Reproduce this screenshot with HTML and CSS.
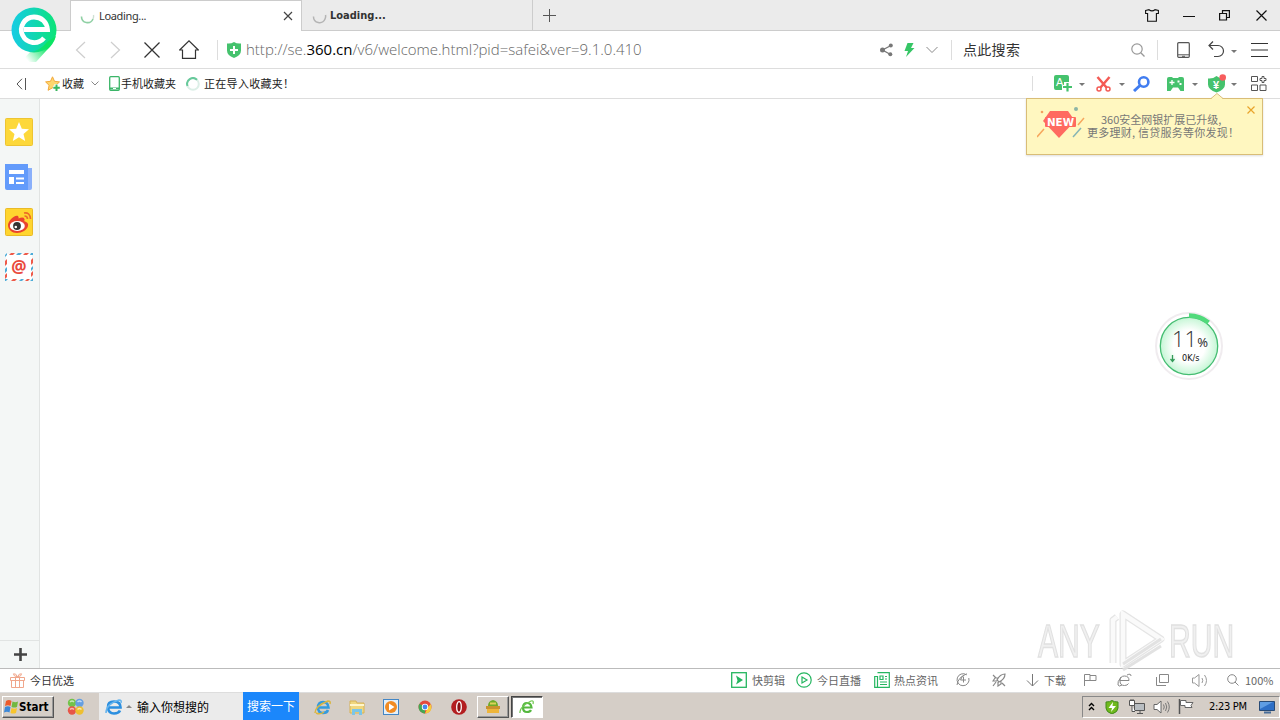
FILE: index.html
```html
<!doctype html>
<html lang="zh-CN">
<head>
<meta charset="utf-8">
<title>360安全浏览器</title>
<link rel="stylesheet" href="styles.css">
</head>

<body>
<div id="desktop">
	<!-- 标签栏 -->
	<div class="tabs">
		<div class="tab on">
			<svg class="spin" width="15" height="15" viewBox="0 0 15 15"><path d="M1.5 7.5a6 6 0 0 0 11.5 2.5" fill="none" stroke="#8fd0a4" stroke-width="1.6"/><path d="M13 10a6 6 0 0 0 .5-4" fill="none" stroke="#cfe0d3" stroke-width="1.4"/></svg>
			<span class="name">Loading...</span>
			<svg class="close" width="10" height="10" viewBox="0 0 10 10"><path d="M1 1l8 8M9 1l-8 8" stroke="#444" stroke-width="1.2"/></svg>
		</div>
		<div class="tab">
			<svg class="spin" width="15" height="15" viewBox="0 0 15 15"><path d="M1.5 7.5a6 6 0 0 0 11.5 2.5a6 6 0 0 0 .5-4" fill="none" stroke="#b4b4b4" stroke-width="1.5"/></svg>
			<b class="name">Loading...</b>
		</div>
		<svg class="add" width="13" height="13" viewBox="0 0 13 13"><path d="M6.500 0v13M0 6.500h13" stroke="#555"/></svg>
		<div class="win">
			<svg width="14" height="13" viewBox="0 0 14 13"><path d="M.6 1.500L4 .7q3 2.300 6 0l3.400.8v3h-2v7.800H2.600V4.500h-2z" fill="none" stroke="#111" stroke-width="1.100"/></svg>
			<svg width="12" height="10" viewBox="0 0 12 10"><path d="M0 5.500h12" stroke="#111"/></svg>
			<svg width="11" height="11" viewBox="0 0 11 11"><path d="M.6 3.500h6.900v6.500H.6zM3.500 3V.6h6.900v6.900H8" fill="none" stroke="#111" stroke-width="1.2"/></svg>
			<svg width="11" height="11" viewBox="0 0 11 11"><path d="M.5.5l10 10M10.500.5l-10 10" stroke="#111" stroke-width="1.2"/></svg>
		</div>
	</div>

	<!-- 地址栏 -->
	<div class="nav">
		<div class="go">
			<svg width="11" height="18" viewBox="0 0 11 18"><path d="M10 1L1.500 9l8.500 8" fill="none" stroke="#cecece" stroke-width="1.200"/></svg>
			<svg width="11" height="18" viewBox="0 0 11 18"><path d="M1 1l8.500 8L1 17" fill="none" stroke="#cecece" stroke-width="1.200"/></svg>
			<svg width="16" height="16" viewBox="0 0 16 16"><path d="M.5.5l15 15M15.500.5l-15 15" stroke="#333" stroke-width="1.300"/></svg>
			<svg width="20" height="19" viewBox="0 0 20 19"><path d="M.7 10L10 .9l9.300 9.100h-2.800v8.300h-13V10z" fill="none" stroke="#333" stroke-width="1.200"/></svg>
		</div>
		<i class="line"></i>
		<svg class="safe" width="14" height="16" viewBox="0 0 14 16"><path d="M0 1.500Q4 2 7 0q3 2 7 1.500v7q0 5-7 7.500q-7-2.500-7-7.500z" fill="#45c26d"/><path d="M7 4v8M3 8h8" stroke="#fff" stroke-width="2"/></svg>
		<div class="url">http://se.<em>360.cn</em>/v6/welcome.html?pid=safei&amp;ver=9.1.0.410</div>
		<div class="act">
			<svg width="13" height="14" viewBox="0 0 13 14"><path d="M11 2.500L2.500 7l8 4.500" fill="none" stroke="#777" stroke-width="1.300"/><circle cx="10.800" cy="2.500" r="2" fill="#777"/><circle cx="2.500" cy="7" r="2.500" fill="#777"/><circle cx="10.300" cy="11.300" r="2" fill="#777"/></svg>
			<svg width="11" height="14" viewBox="0 0 11 14"><path d="M3.500 0h6L7 5h3.500L2 14l2-6H.5z" fill="#36c666"/></svg>
			<svg width="12" height="8" viewBox="0 0 12 8"><path d="M.5 1L6 6.500 11.500 1" fill="none" stroke="#888"/></svg>
		</div>
		<i class="line"></i>
		<div class="search">点此搜索</div>
		<svg class="mag" width="14" height="14" viewBox="0 0 14 14"><circle cx="6" cy="6" r="5.200" fill="none" stroke="#999" stroke-width="1.200"/><path d="M9.800 9.800l3.700 3.700" stroke="#999" stroke-width="1.300"/></svg>
		<i class="line"></i>
		<div class="tool">
			<svg width="13" height="16" viewBox="0 0 13 16"><rect x=".7" y=".7" width="11.600" height="14.600" rx="1" fill="none" stroke="#555" stroke-width="1.200"/><path d="M1 12.800h11" stroke="#555"/><path d="M5 14.300h3" stroke="#555"/></svg>
			<svg width="17" height="17" viewBox="0 0 17 17"><path d="M5 .5L1 4.500l4 4M1 4.500h9a5.500 5.500 0 0 1 0 11H6" fill="none" stroke="#444" stroke-width="1.200"/></svg>
			<i class="caret"></i>
			<svg width="17" height="14" viewBox="0 0 17 14"><path d="M0 .5h17M0 7h17M0 13.500h17" stroke="#333"/></svg>
		</div>
	</div>

	<!-- 收藏栏 -->
	<div class="fav">
		<svg class="fold" width="10" height="12" viewBox="0 0 10 12"><path d="M6 .8L1 6l5 5.200M9.500 0v12" fill="none" stroke="#555"/></svg>
		<svg class="star" width="16" height="16" viewBox="0 0 16 16"><path d="M7.500.8l2 4.500 5 .6-3.700 3.400 1 5-4.300-2.500-4.400 2.500 1-5L.6 5.900l4.900-.6z" fill="#fdd66e" stroke="#f2a83c"/><path d="M11.500 8v7.500M8 11.700h7.500" stroke="#fff" stroke-width="4"/><path d="M11.500 8.500v6.500M8.300 11.700h6.500" stroke="#3ab55e" stroke-width="2"/></svg>
		<span class="t1">收藏</span>
		<svg class="down" width="8" height="5" viewBox="0 0 8 5"><path d="M.5.5L4 4 7.500.5" fill="none" stroke="#888"/></svg>
		<svg class="phone" width="11" height="15" viewBox="0 0 11 15"><rect x=".7" y=".7" width="9.600" height="13.600" rx="1" fill="#fff" stroke="#3bb568" stroke-width="1.300"/><path d="M1 12.500h9" stroke="#3bb568" stroke-width="2"/><path d="M4 12.500h3" stroke="#fff"/></svg>
		<span class="t2">手机收藏夹</span>
		<svg class="ring" width="14" height="14" viewBox="0 0 14 14"><circle cx="7" cy="7" r="5.800" fill="none" stroke="#dcefe7" stroke-width="2"/><path d="M1.500 9A5.800 5.800 0 0 1 11 2.800" fill="none" stroke="#68c99b" stroke-width="2"/></svg>
		<span class="t3">正在导入收藏夹！</span>
		<div class="ext">
			<i class="line"></i>
			<svg width="18" height="17" viewBox="0 0 18 17"><path d="M2 0h11q2 0 2 2v5h-5v4H8v4H2q-2 0-2-2V2q0-2 2-2z" fill="#45c26d"/><text class="a" x="2" y="11">A</text><path d="M13.500 7v10M8.500 12H18" stroke="#fff" stroke-width="4"/><path d="M13.500 8v8.500M9 12h9" stroke="#45c26d" stroke-width="2.200"/></svg>
			<i class="caret c1"></i>
			<svg width="15" height="16" viewBox="0 0 15 16"><path d="M1.500 1l9 10.500M13.500 1L4.500 11.500" stroke="#f45b55" stroke-width="2.500"/><circle cx="3" cy="13" r="2" fill="none" stroke="#f45b55" stroke-width="1.500"/><circle cx="12" cy="13" r="2" fill="none" stroke="#f45b55" stroke-width="1.500"/></svg>
			<i class="caret c2"></i>
			<svg class="key" width="17" height="16" viewBox="0 0 17 16"><circle cx="10.700" cy="6" r="4.700" fill="none" stroke="#417df0" stroke-width="2.600"/><path d="M7 9.500L1 15" stroke="#417df0" stroke-width="3"/></svg>
			<svg width="17" height="14" viewBox="0 0 17 14"><path d="M2 0h3l1 1h5l1-1h3q2 0 2 2v12h-3.500l-2.500-3.500H6L3.500 14H0V2q0-2 2-2z" fill="#45c26d"/><path d="M5 3v5M2.500 5.500h5" stroke="#fff" stroke-width="1.300"/><path d="M10.500 3.500h2v2h-2zM12.500 6h2v2h-2z" fill="#fff"/></svg>
			<i class="caret c3"></i>
			<svg width="18" height="19" viewBox="0 0 18 19"><path d="M0 4.500q5 .5 8.500-2.500 3.500 3 8.500 2.500v6q0 5-8.500 8Q0 15.500 0 10.500z" fill="#45c26d"/><text class="y" x="5" y="14.500">¥</text><circle cx="14.700" cy="3.500" r="3.300" fill="#f75d5d"/></svg>
			<i class="caret c4"></i>
			<svg width="16" height="15" viewBox="0 0 16 15"><path d="M.5.500h6v5h-6zM.5 9h6v5.500h-6zM9 9h6v5.500H9z" fill="none" stroke="#555"/><path d="M11 .5h2v2h2v2h-2v2h-2v-2H9v-2h2z" fill="none" stroke="#555"/></svg>
		</div>
	</div>

	<div class="main">
		<div class="side">
			<svg width="28" height="28" viewBox="0 0 28 28"><rect x=".5" y=".5" width="27" height="27" rx="1" fill="#fdd83a" stroke="#edc432"/><path d="M14 4l2.800 6.700 7.200.6-5.500 4.700 1.700 7-6.200-3.800L7.800 23l1.700-7L4 11.300l7.200-.6z" fill="#fff"/></svg>
			<svg width="28" height="28" viewBox="0 0 28 28"><path d="M22 5h5v20q0 2-2 2h-3z" fill="#8ab0fb"/><path d="M0 1h23v26H2q-2 0-2-2z" fill="#639bfb"/><path d="M4 7h15v4H4zM4 14h5v7H4zM11 14.500h8v2h-8zM11 19h8v2h-8z" fill="#fff"/></svg>
			<svg width="28" height="28" viewBox="0 0 28 28"><rect x=".5" y=".5" width="27" height="27" rx="1" fill="#ffd52f" stroke="#e9ba27"/><path d="M3 17C3 13 10 6 13 8q1 1 .5 2.500 5-2 6 .5.500 1.500-.5 2 5 1.500 4 5C22 22 17 25 12 25c-5 0-9-3.500-9-8z" fill="#e9432e"/><ellipse cx="12.300" cy="18" rx="7.500" ry="5" fill="#fff"/><circle cx="12" cy="18" r="3.900" fill="#333"/><circle cx="10.800" cy="19" r="1.300" fill="#fff"/><path d="M19 5q6-1 6.500 6M19.500 8q3 0 3 3" fill="none" stroke="#ec6c28" stroke-width="1.700"/></svg>
			<div class="mail"><svg width="28" height="28" viewBox="0 0 28 28"><path d="M1 1h26v26H1z" fill="#fff"/><path d="M6 0h4L8 2H4zM20 0h4l-2 2h-4zM28 5v5l-2 2V7zM28 18v4l-2 2v-4zM6 28h4l2-2H8zM20 28h3l2-2h-3zM0 8v5l2-2V6zM0 22v4l2-2v-4z" fill="#ee5a49"/><path d="M13 0h4l-2 2h-4zM26 0h2v2h-3zM28 13v3l-2 2v-3zM28 25v3h-3zM0 28v-2h3l-2 2zM14 28h3l2-2h-3zM0 2v2l2-2V0zM0 16v4l2-2v-4z" fill="#4dacd8"/></svg><b>@</b></div>
			<div class="plus"><svg width="13" height="13" viewBox="0 0 13 13"><path d="M6.500 0v13M0 6.500h13" stroke="#444" stroke-width="2.600"/></svg></div>
		</div>

		<!-- 升级提示 -->
		<div class="tip">
			<svg class="arrow" width="12" height="6" viewBox="0 0 12 6"><path d="M0 6l6-5 6 5z" fill="#fff7c0"/><path d="M0 5.500l6-5 6 5" fill="none" stroke="#d9bd77"/></svg>
			<svg class="gem" width="48" height="34" viewBox="0 0 48 34"><path d="M13 4h18l7 10-16 17L6 14z" fill="#ff6a60"/><rect x="8" y="10" width="31" height="10" rx="1" fill="#ff6a60"/><text x="10" y="19" textLength="27" lengthAdjust="spacingAndGlyphs">NEW</text><path d="M0 30l7-8M41 18l6-7" stroke="#f7a75d" stroke-width="1.500"/><path d="M36 30l8-9" stroke="#86b5b4" stroke-width="1.500"/><circle cx="39" cy="2" r="2" fill="#8db5a6"/><circle cx="5" cy="5" r="1.300" fill="#f4a160"/></svg>
			<p class="p1">360安全网银扩展已升级,</p>
			<p class="p2">更多理财, 信贷服务等你发现！</p>
			<svg class="x" width="8" height="8" viewBox="0 0 8 8"><path d="M.5.5l7 7M7.500.5l-7 7" stroke="#e9a42b" stroke-width="1.200"/></svg>
		</div>

		<!-- 加速球 -->
		<div class="ball">
			<svg width="72" height="72" viewBox="0 0 72 72">
				<defs><radialGradient id="glow"><stop offset=".55" stop-color="#fff"/><stop offset="1" stop-color="#c5f6d5"/></radialGradient></defs>
				<circle cx="36" cy="36" r="33" fill="#fff" stroke="#f0ecef" stroke-width="2"/>
				<circle cx="36" cy="36" r="28.700" fill="url(#glow)" stroke="#45bd72" stroke-width="1.300"/>
				<path d="M36 5.500a30.500 30.500 0 0 1 19.500 7" fill="none" stroke="#51da7b" stroke-width="4.500"/>
				<path d="M19.500 45v6M17.500 49l2 2.500 2-2.500" fill="none" stroke="#349b59" stroke-width="1.300"/>
			</svg>
			<div class="num">11<small>%</small></div>
			<div class="speed">0K/s</div>
		</div>

		<div class="mark">
			<span>ANY</span>
			<svg width="58" height="64" viewBox="0 0 58 64"><path d="M5 54V11l4-3M15 5v50l38-25z" fill="none" stroke="#e2e2e2" stroke-width="7" stroke-linejoin="round"/><path d="M5 54V11l4-3M15 5v50l38-25z" fill="none" stroke="#fafafa" stroke-width="4.500"/><path d="M15 55l38-25M15 61l38-24" stroke="#dfdfdf" stroke-width="3"/></svg>
			<span>RUN</span>
		</div>
	</div>

	<!-- 状态栏 -->
	<div class="status">
		<svg class="gift" width="15" height="15" viewBox="0 0 15 15"><path d="M.5 4.500h14v3H.5zM1.500 7.500h12v7h-12zM5.500 4.500v10M9.500 4.500v10M7.500 4Q3 3 3.500.8 6 0 7.500 4 9 0 11.500.8 12 3 7.500 4" fill="none" stroke="#f0a68b"/></svg>
		<span class="pick">今日优选</span>
		<div class="sr">
			<svg width="16" height="16" viewBox="0 0 16 16"><rect x=".7" y=".7" width="14.600" height="14.600" fill="none" stroke="#25b660" stroke-width="1.300"/><path d="M5 3.500l7 4.500-7 4.500 1.500-4z" fill="#25b660"/></svg>
			<span>快剪辑</span>
			<svg width="16" height="16" viewBox="0 0 16 16"><circle cx="8" cy="8" r="7.200" fill="none" stroke="#25b660" stroke-width="1.200"/><path d="M6 5l5 3-5 3z" fill="none" stroke="#25b660" stroke-width="1.200"/></svg>
			<span>今日直播</span>
			<svg width="16" height="16" viewBox="0 0 16 16"><path d="M3.500.7h11.800v14.600H.7V4.500h2.800v10.800M6 4h3v3.500H6zM11 4.500h2M11 7h2M6 10h7M6 12.500h7" fill="none" stroke="#25b660" stroke-width="1.200"/></svg>
			<span>热点资讯</span>
			<svg width="14" height="14" viewBox="0 0 14 14"><path d="M10.500 1.800A6 6 0 1 0 12.800 5M1 12Q2 4 11 .8M6.500 3L4.500 7H10M7.500 3.500v6" fill="none" stroke="#888"/></svg>
			<svg width="14" height="14" viewBox="0 0 14 14"><path d="M13 1Q8 1 5 7l2 2q6-3 6-8zM6 5H3L1 8h4M9 8v3l-3 2V9M4 9l-3 4M10 10l3 3M1 2l3 3" fill="none" stroke="#888" stroke-width="1.200"/></svg>
			<svg width="13" height="13" viewBox="0 0 13 13"><path d="M6.500 0v12M1 6.500l5.500 5.500L12 6.500" fill="none" stroke="#777"/></svg>
			<span>下载</span>
			<svg width="14" height="12" viewBox="0 0 14 12"><path d="M1.500 12V.5H7v6H1.500M7 1.500h6v5H7" fill="none" stroke="#888"/></svg>
			<svg width="15" height="14" viewBox="0 0 15 14"><path d="M2.500 7.500H12q0-4.500-4.500-4.500T3 8q0 4.500 4.500 4.500 3 0 4-2M10 2q4-2 4 1M4 4q-4 5-3 8 1 2 4 0" fill="none" stroke="#888"/></svg>
			<svg width="13" height="12" viewBox="0 0 13 12"><path d="M3.500.5h9v8h-9zM.5 3v8.500H10" fill="none" stroke="#888"/></svg>
			<svg width="16" height="13" viewBox="0 0 16 13"><path d="M.5 4h2L7 .5v12L2.500 9h-2zM10 4q1.500 2.500 0 5M12.500 1q4 5.500 0 11" fill="none" stroke="#999"/></svg>
			<svg width="12" height="12" viewBox="0 0 12 12"><circle cx="5" cy="5" r="4.300" fill="none" stroke="#888"/><path d="M8 8l3.500 3.500" stroke="#888"/></svg>
			<span class="zoom">100%</span>
		</div>
	</div>

	<!-- 任务栏 -->
	<div class="task">
		<div class="start"><svg width="15" height="15" viewBox="0 0 15 15"><path d="M2 2q3-2 5.500 0L6.500 7Q4 5.500 1 7z" fill="#ec5b2c"/><path d="M8.500 2.500q3 1.500 5.500 0L13 8q-2.500 1-5.500 0z" fill="#72b83f"/><path d="M1 8q3-1.500 5.500 0l-1 5.500Q3 12 0 13.500z" fill="#3c88d8"/><path d="M7.500 9q3 1.500 5.500 0l-1 5q-3 1-5.500 0z" fill="#f8c52d"/></svg><b>Start</b></div>
		<svg class="balls" width="18" height="18" viewBox="0 0 18 18"><circle cx="5" cy="5" r="4.200" fill="#72c34a"/><circle cx="12.500" cy="5" r="4.200" fill="#659fe2"/><circle cx="5" cy="12.500" r="4.200" fill="#e75648"/><circle cx="12.500" cy="12.500" r="4.200" fill="#eebf2f"/><path d="M3 4q2-2 4 0M10.500 4q2-2 4 0M3 11.500q2-2 4 0M10.500 11.500q2-2 4 0" fill="none" stroke="#fff" stroke-opacity=".6" stroke-width="1.500"/></svg>
		<div class="find">
			<svg width="18" height="18" viewBox="0 0 18 18"><path d="M3 9.500h12.500Q15.500 3.500 9 3.500T3 9.500t6 6q4.500 0 6-3" fill="none" stroke="#2b8fe0" stroke-width="2.700"/><path d="M1 15Q1 6 14 2q3 0 2 3" fill="none" stroke="#66b5ee" stroke-width="1.500"/></svg>
			<i class="up"></i>
			<span>输入你想搜的</span>
		</div>
		<div class="btn">搜索一下</div>
		<div class="apps">
			<svg width="18" height="18" viewBox="0 0 18 18"><path d="M4 9.500h10.500Q14 4 9 4T4 9.500 9 15q4 0 5-3" fill="none" stroke="#349bdd" stroke-width="2.500"/><path d="M1 15q0-7 13-12 3 0 2 3M2 15q4 2 8-1" fill="none" stroke="#d9b641" stroke-width="1.500"/></svg>
			<svg width="18" height="18" viewBox="0 0 18 18"><path d="M2 3h6l1 2h7v10H2z" fill="#efd77f" stroke="#d6b257"/><path d="M2 7h14" stroke="#fff6cb" stroke-width="2"/><path d="M4 17v-6h10v6h-3v-3H7v3z" fill="#7ac5e8"/></svg>
			<svg width="18" height="18" viewBox="0 0 18 18"><rect x="1.500" y="1.500" width="15" height="15" fill="#e5f0f8" stroke="#4386c5"/><circle cx="9" cy="9" r="6" fill="#f18b22"/><path d="M7 5.500l5.500 3.500L7 12.500z" fill="#fff"/></svg>
			<svg width="18" height="18" viewBox="0 0 18 18"><circle cx="9" cy="9" r="6.500" fill="#e34a3d"/><path d="M3.400 5.800L9 9v6.500A6.500 6.500 0 0 1 3.400 5.800z" fill="#43a853"/><path d="M9 15.500L12 9l3-3q2 9-6 9.500z" fill="#f6cd3b"/><circle cx="9" cy="9" r="3.200" fill="#fff"/><circle cx="9" cy="9" r="2.400" fill="#4688ed"/></svg>
			<svg width="18" height="18" viewBox="0 0 18 18"><circle cx="9" cy="9" r="7.800" fill="#b31e20"/><ellipse cx="9" cy="9" rx="2.300" ry="5.300" fill="#8b1013" stroke="#fff" stroke-width="1.300"/></svg>
			<div class="app"><svg width="16" height="16" viewBox="0 0 16 16"><path d="M2 8h12v6H2z" fill="#eeb53a"/><path d="M1 7h14v3H1z" fill="#c9922f"/><path d="M3 7q0-5 5-6 5 1 5 6z" fill="#6faa29"/><path d="M5 3.500h6v2H5z" fill="#dbd259"/></svg></div>
			<div class="app cur"><svg width="16" height="16" viewBox="0 0 16 16"><path d="M4 8.500h8.500Q12 4 8 4T4 8.500t4 4.500q3 0 4-2" fill="none" stroke="#55b83f" stroke-width="2.200"/><path d="M1 14Q0 8 12 2q3-1 2 3" fill="none" stroke="#75cb56" stroke-width="1.300"/></svg></div>
		</div>
		<div class="tray">
			<svg width="7" height="10" viewBox="0 0 7 10"><path d="M1 4L3.500 1.500 6 4M1 8L3.500 5.500 6 8" fill="none" stroke="#000" stroke-width="1.400"/></svg>
			<svg width="14" height="14" viewBox="0 0 14 14"><path d="M1 2q4 0 6-1.500Q9 2 13 2v6q0 4-6 6Q1 12 1 8z" fill="#70b91d" stroke="#408b1c"/><path d="M8 2L3.500 8H7l-1 4 5-6H7.500z" fill="#fff"/></svg>
			<svg width="16" height="15" viewBox="0 0 16 15"><path d="M5.500 4.500h10v7h-10zM8 14.500h6M11 12v2" fill="#b8bdc1" stroke="#555"/><path d="M.5 1.500h5v5h-5zM3 6.500v6h3M2 0v2M4 0v2" fill="#fff" stroke="#555"/></svg>
			<svg width="17" height="14" viewBox="0 0 17 14"><path d="M1 4.500h3L8 1v12L4 9.500H1z" fill="#fff" stroke="#666"/><path d="M10.500 4.500q1.500 2.500 0 5M12.500 3q2.500 4 0 8M14.500 1.500q3.500 5.500 0 11" fill="none" stroke="#777"/></svg>
			<svg width="16" height="15" viewBox="0 0 16 15"><path d="M1.500 0v15" stroke="#555" stroke-width="1.500"/><path d="M2.500 1.500H8v2h7l-2 3 1 2H7v-2H2.500z" fill="#fff" stroke="#666"/></svg>
			<span>2:23 PM</span>
			<svg width="16" height="14" viewBox="0 0 16 14"><path d="M.5 1.500h15v9H.5z" fill="#2e6fc6" stroke="#284b76"/><path d="M1 9l13-7H1z" fill="#5f9de3"/><path d="M5 12.500h7" stroke="#486d98" stroke-width="2"/></svg>
		</div>
	</div>

	<!-- 浏览器标志 -->
	<svg class="logo" width="48" height="56" viewBox="0 0 48 56">
		<defs>
			<linearGradient id="lg" x1="0" y1=".5" x2="1" y2=".5"><stop offset="0" stop-color="#16cce4"/><stop offset=".5" stop-color="#12d6b4"/><stop offset="1" stop-color="#0be477"/></linearGradient>
			<linearGradient id="tail" gradientUnits="userSpaceOnUse" x1="36" y1="40" x2="18" y2="55"><stop offset="0" stop-color="#0be463"/><stop offset="1" stop-color="#0be463" stop-opacity="0"/></linearGradient>
		</defs>
		<circle cx="24" cy="24" r="22.500" fill="url(#lg)"/>
		<path d="M46 30Q44 38 36 45L26 56H11l9-10q10-1 17-10z" fill="url(#tail)"/>
		<path d="M14 23.500h23.500C37 16 31.500 11 24 11A12.800 12.800 0 1 0 34 32" fill="none" stroke="#fff" stroke-width="4.800"/>
	</svg>
</div>
</body>
</html>
```
FILE: styles.css
```css
*{margin:0;padding:0;box-sizing:border-box}
body{width:1280px;height:720px;overflow:hidden;background:#fff;font:11px/14px "DejaVu Sans Condensed","Noto Sans CJK SC",sans-serif;color:#333}
svg{display:block;flex:none}
span,b,p,.url,.search,.btn{white-space:nowrap}
#desktop{position:relative;display:flex;flex-direction:column;width:1280px;height:720px}
.line{flex:none;width:1px;height:20px;background:#ddd}
.caret{flex:none;width:0;height:0;border:3px solid transparent;border-top-color:#777;border-bottom:0}

/* 标签栏 */
.tabs{display:flex;height:31px;padding-left:70px;background:#ebebeb;border-bottom:1px solid #ccc}
.tab{display:flex;align-items:center;width:231px;height:30px;padding:2px 9px 0 10px;border-right:1px solid #ccc}
.tab.on{width:232px;height:31px;background:#fff;border:1px solid #ccc;border-bottom:0;padding:0 8px 0 9px}
.tab .name{width:185px;margin-left:3px}
.tab.on .name{margin-left:4px;font-family:"Noto Sans",sans-serif;letter-spacing:-.35px}
.tab b{font-family:"DejaVu Sans Condensed",sans-serif}
.tab .close{margin-left:auto}
.add{margin:9px 0 0 10px}
.win{display:flex;align-items:center;gap:26px;margin-left:auto;padding:1px 13px 0 0}
.win svg:first-child{margin-right:-2px}
.win svg:nth-child(2){margin-right:-2px}

/* 地址栏 */
.nav{display:flex;align-items:center;height:38px;border-bottom:1px solid #ddd}
.go{display:flex;align-items:center;width:217px;padding-left:75px}
.go svg:nth-child(2){margin-left:24px}
.go svg:nth-child(3){margin-left:23px}
.go svg:nth-child(4){margin-left:19px}
.safe{margin-left:9px}
.url{width:639px;padding-left:5px;font:300 15px/20px "Open Sans",sans-serif;color:#666;padding-bottom:2px}
.url em{font-style:normal;color:#000;font-weight:400}
.act{display:flex;align-items:center;width:71px;gap:11px}
.search{width:179px;padding:0 0 2px 11px;font:14px/20px "Noto Sans CJK SC",sans-serif;letter-spacing:.3px}
.nav .mag{margin-right:12px}
.tool{display:flex;align-items:center;padding-left:19px}
.tool svg:nth-child(2){margin-left:18px}
.tool .caret{margin:3px 14px 0 6px}

/* 收藏栏 */
.fav{display:flex;align-items:center;height:30px;border-bottom:1px solid #ddd;font-family:"Noto Sans CJK SC",sans-serif;color:#222}
.fav span{margin-top:-2px}
.fold{margin-left:16px}
.star{margin-left:19px}
.t1{width:29px;padding-left:1px}
.down{margin-left:1px}
.phone{margin-left:10px}
.t2{width:65px;padding-left:1px}
.ring{margin-left:1px}
.t3{margin-left:4px;letter-spacing:.3px}
.ext{display:flex;align-items:center;margin-left:auto;padding-right:13px}
.ext .line{height:15px;margin-right:21px}
.ext text{font:bold 9px "Liberation Sans",sans-serif;fill:#fff}
.ext .a{font-size:11px;font-weight:normal}
.ext .y{font-size:11px}
.ext .c1{margin:2px 11px 0 7px}
.ext .c2{margin:2px 8px 0 8px}
.ext .c3{margin:2px 10px 0 8px}
.ext .c4{margin:2px 14px 0 5px}
.ext .c2+.key{margin-right:17px}

/* 主区域 */
.main{position:relative;display:flex;height:569px}
.side{display:flex;flex-direction:column;align-items:center;gap:17px;width:40px;padding-top:19px;padding-right:2px;background:#f4f7f6;border-right:1px solid #e1e4e3}
.mail{display:grid;place-items:center}
.mail>*{grid-area:1/1}
.mail b{padding:0 0 1px 1px;font:bold 17px/20px "Noto Sans",sans-serif;color:#e94a3d}
.plus{display:flex;justify-content:center;width:40px;height:28px;margin:auto -2px 0 0;padding:7px 0 0 1px;border-top:1px solid #e1e4e3}
.tip{position:absolute;top:-1px;left:1026px;width:237px;height:57px;background:#fff7c0;border:1px solid #d9bd77;box-shadow:0 1px 2px #ddd;font:11px/13px "Noto Sans CJK SC",sans-serif;color:#777}
.tip .arrow{position:absolute;top:-6px;left:184px}
.gem{position:absolute;left:10px;top:8px}
.gem text{font:bold 10px "DejaVu Sans",sans-serif;fill:#fff}
.tip .x{position:absolute;right:7px;top:7px}
.tip p{padding-left:60px}
.tip .p2{letter-spacing:.25px}
.tip .p1{margin-top:14px;padding-left:74px}
.ball{position:absolute;left:1153px;top:211px;width:72px;height:72px}
.num{position:absolute;left:19px;top:16px;font:300 22px/24px "Open Sans",sans-serif;color:#333}
.num small{font:13px/16px "Noto Sans",sans-serif;letter-spacing:-1px}
.speed{position:absolute;left:29px;top:43px;font:9px/11px "DejaVu Sans Condensed",sans-serif;color:#111}
.mark{position:absolute;z-index:2;left:1038px;top:510px;display:flex;align-items:center;opacity:.9}
.mark span{width:66px;font:47px/56px "Liberation Sans",sans-serif;color:#efefef;-webkit-text-stroke:1.5px #dedede;transform:scaleX(.64);transform-origin:0 50%;filter:blur(.4px)}
.mark svg{margin:0 3px 0 4px;filter:blur(.4px)}

/* 状态栏 */
.status{display:flex;align-items:center;height:25px;padding-bottom:1px;border-top:1px solid #bbb;border-bottom:1px solid #ddd;font-family:"Noto Sans CJK SC",sans-serif;color:#666}
.status span{padding-bottom:1px}
.gift{margin-left:10px}
.pick{margin-left:5px;color:#333}
.sr{display:flex;align-items:center;width:549px;margin-left:auto}
.sr span{width:44px;margin-left:5px}
.sr span:nth-of-type(1){width:38px;margin-right:6px}
.sr span:nth-of-type(2){width:51px;margin-right:6px}
.sr span:nth-of-type(3){width:51px;margin-left:4px;margin-right:11px}
.sr svg:nth-of-type(5){margin:0 20px 0 22px}
.sr span:nth-of-type(4){width:24px;margin-right:15px}
.sr svg:nth-of-type(7){margin-right:20px}
.sr svg:nth-of-type(8){margin-right:24px}
.sr svg:nth-of-type(9){margin-right:23px}
.sr svg:nth-of-type(10){margin-right:19px}
.sr .zoom{width:auto;margin-left:6px}

/* 任务栏 */
.task{display:flex;align-items:center;height:27px;background:#d5cec7;color:#000;font-family:"Noto Sans CJK SC",sans-serif}
.start{display:flex;align-items:center;width:52px;height:22px;margin-left:2px;padding-left:1px;border:1px solid;border-color:#fff #555 #555 #fff;box-shadow:inset -1px -1px #999}
.start b{font:bold 11.5px/14px "DejaVu Sans Condensed",sans-serif}
.balls{margin-left:13px}
.find{display:flex;align-items:center;width:144px;height:27px;margin-left:14px;padding-left:6px;background:#ebebeb;font-size:12px}
.up{border:3px solid transparent;border-bottom-color:#888;border-top:0;margin:0 5px 0 3px}
.btn{width:56px;height:28px;margin-top:-1px;background:#1b87fb;color:#fff;text-align:center;font-size:12px;line-height:28px}
.apps{display:flex;align-items:center;gap:16px;padding-left:15px}
.app{display:flex;align-items:center;justify-content:center;width:32px;height:22px;margin-left:-7px;border:1px solid;border-color:#fff #555 #555 #fff;box-shadow:inset -1px -1px #999}
.app.cur{margin-left:-14px;background:#fff;border-color:#444 #fff #fff #444;box-shadow:inset 1px 1px #777}
.tray{display:flex;align-items:center;width:198px;height:22px;margin-left:auto;padding-left:5px;border:1px solid;border-color:#888 #fff #fff #888;gap:8px}
.tray svg:nth-child(2){margin:0 2px}
.tray svg:last-child{margin-left:1px}
.tray span{width:42px;margin:0 -1px 0 7px;font:11px/14px "DejaVu Sans Condensed",sans-serif;letter-spacing:-.3px}
.logo{position:absolute;left:10px;top:6px}
```
